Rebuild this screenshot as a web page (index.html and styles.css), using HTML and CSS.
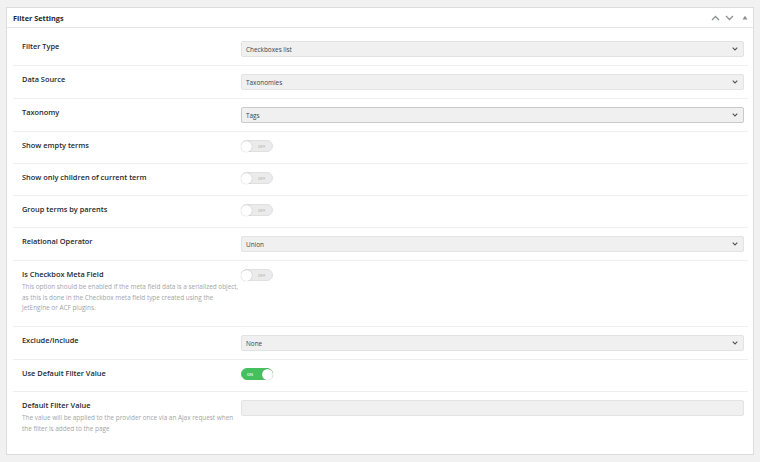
FILE: index.html
```html
<!DOCTYPE html>
<html lang="en">
<head>
<meta charset="utf-8">
<title>Filter Settings</title>
<link rel="stylesheet" href="styles.css">
</head>
<body>
<div class="panel">
  <div class="panel-header">
    <span class="title">Filter Settings</span>
    <div class="actions">
      <svg class="act" width="9" height="6" viewBox="0 0 9 6"><polyline points="1,5 4.5,1.5 8,5" fill="none" stroke="#8c8f94" stroke-width="1.3"/></svg>
      <svg class="act" width="9" height="6" viewBox="0 0 9 6"><polyline points="1,1 4.5,4.5 8,1" fill="none" stroke="#8c8f94" stroke-width="1.3"/></svg>
      <svg class="act tri" width="6" height="5" viewBox="0 0 6 5"><polygon points="0.5,4.5 3,0.8 5.5,4.5" fill="#8c8f94"/></svg>
    </div>
  </div>
  <div class="panel-body">
    <div class="row">
      <div class="label-col"><div class="label">Filter Type</div></div>
      <div class="control-col"><div class="select"><span>Checkboxes list</span><svg class="chev" width="6" height="4" viewBox="0 0 6 4"><polyline points="0.7,0.7 3,3 5.3,0.7" fill="none" stroke="#555" stroke-width="1.1"/></svg></div></div>
    </div>
    <div class="row">
      <div class="label-col"><div class="label">Data Source</div></div>
      <div class="control-col"><div class="select"><span>Taxonomies</span><svg class="chev" width="6" height="4" viewBox="0 0 6 4"><polyline points="0.7,0.7 3,3 5.3,0.7" fill="none" stroke="#555" stroke-width="1.1"/></svg></div></div>
    </div>
    <div class="row">
      <div class="label-col"><div class="label">Taxonomy</div></div>
      <div class="control-col"><div class="select focused"><span>Tags</span><svg class="chev" width="6" height="4" viewBox="0 0 6 4"><polyline points="0.7,0.7 3,3 5.3,0.7" fill="none" stroke="#555" stroke-width="1.1"/></svg></div></div>
    </div>
    <div class="row">
      <div class="label-col"><div class="label">Show empty terms</div></div>
      <div class="control-col"><div class="toggle off"><span class="knob"></span><span class="state">OFF</span></div></div>
    </div>
    <div class="row">
      <div class="label-col"><div class="label">Show only children of current term</div></div>
      <div class="control-col"><div class="toggle off"><span class="knob"></span><span class="state">OFF</span></div></div>
    </div>
    <div class="row">
      <div class="label-col"><div class="label">Group terms by parents</div></div>
      <div class="control-col"><div class="toggle off"><span class="knob"></span><span class="state">OFF</span></div></div>
    </div>
    <div class="row">
      <div class="label-col"><div class="label">Relational Operator</div></div>
      <div class="control-col"><div class="select"><span>Union</span><svg class="chev" width="6" height="4" viewBox="0 0 6 4"><polyline points="0.7,0.7 3,3 5.3,0.7" fill="none" stroke="#555" stroke-width="1.1"/></svg></div></div>
    </div>
    <div class="row">
      <div class="label-col">
        <div class="label">Is Checkbox Meta Field</div>
        <div class="desc">This option should be enabled if the meta field data is a serialized object, as this is done in the Checkbox meta field type created using the JetEngine or ACF plugins.</div>
      </div>
      <div class="control-col"><div class="toggle off"><span class="knob"></span><span class="state">OFF</span></div></div>
    </div>
    <div class="row">
      <div class="label-col"><div class="label">Exclude/Include</div></div>
      <div class="control-col"><div class="select"><span>None</span><svg class="chev" width="6" height="4" viewBox="0 0 6 4"><polyline points="0.7,0.7 3,3 5.3,0.7" fill="none" stroke="#555" stroke-width="1.1"/></svg></div></div>
    </div>
    <div class="row">
      <div class="label-col"><div class="label">Use Default Filter Value</div></div>
      <div class="control-col"><div class="toggle on"><span class="state">ON</span><span class="knob"></span></div></div>
    </div>
    <div class="row last">
      <div class="label-col">
        <div class="label">Default Filter Value</div>
        <div class="desc">The value will be applied to the provider once via an Ajax request when the filter is added to the page</div>
      </div>
      <div class="control-col"><div class="input"></div></div>
    </div>
  </div>
</div>
</body>
</html>
```
FILE: styles.css
```css
* { box-sizing: border-box; }
html, body { height: 100%; }
body {
  margin: 0;
  padding: 7px 6px;
  background: #f1f1f1;
  font-family: "Open Sans", "Noto Sans", sans-serif;
  color: #23282d;
  display: flex;
  flex-direction: column;
}
.panel {
  flex: 1;
  background: #fff;
  border: 1px solid #dcdcde;
  display: flex;
  flex-direction: column;
}
.panel-header {
  height: 20px;
  border-bottom: 1px solid #e5e5e5;
  display: flex;
  align-items: center;
  justify-content: space-between;
  padding: 0 5px 0 6px;
}
.title {
  font-size: 7.3px;
  font-weight: 700;
  color: #23282d;
}
.actions {
  display: flex;
  align-items: center;
  gap: 5px;
}
.act { display: block; }
.tri { margin-left: 3px; }
.panel-body {
  padding: 5px 5px 0 6px;
}
.row {
  display: flex;
  padding: 8px 4px 8px 9px;
  border-bottom: 1px solid #efefef;
}
.row.last { border-bottom: none; }
.label-col {
  width: 219px;
  flex: none;
  padding-right: 2px;
}
.control-col {
  flex: 1;
  min-height: 15px;
}
.label {
  font-size: 7.4px;
  font-weight: 600;
  line-height: 10px;
  color: #23282d;
}
.desc {
  margin: 3px 0 4.5px;
  font-size: 6.4px;
  line-height: 10.5px;
  color: #a2a5a8;
}
.select, .input {
  height: 16px;
  border: 1px solid #e3e3e3;
  background: #f0f0f0;
  border-radius: 2px;
  padding: 0 5px 0 4px;
  display: flex;
  align-items: center;
  justify-content: space-between;
  font-size: 6.4px;
  color: #3c434a;
}
.select.focused { border-color: #c9c9c9; }
.chev { display: block; }
.toggle {
  width: 32px;
  height: 12px;
  border-radius: 6px;
  display: flex;
  align-items: center;
}
.toggle.off {
  background: #ebebeb;
  border: 1px solid #e0e0e0;
}
.toggle.on {
  background: #46c05e;
  border: 1px solid #46c05e;
  justify-content: space-between;
}
.knob {
  width: 11px;
  height: 11px;
  border-radius: 50%;
  background: #fff;
  box-shadow: 0 0 1px rgba(0,0,0,0.35);
  flex: none;
  margin-left: -1px;
}
.toggle.on .knob { margin-left: 0; margin-right: -1px; }
.state {
  font-size: 3.8px;
  font-weight: 600;
  letter-spacing: 0.1px;
}
.toggle.off .state { color: #b5b5b5; margin-left: 6px; }
.toggle.on .state { color: #fff; margin-left: 5px; }
```
